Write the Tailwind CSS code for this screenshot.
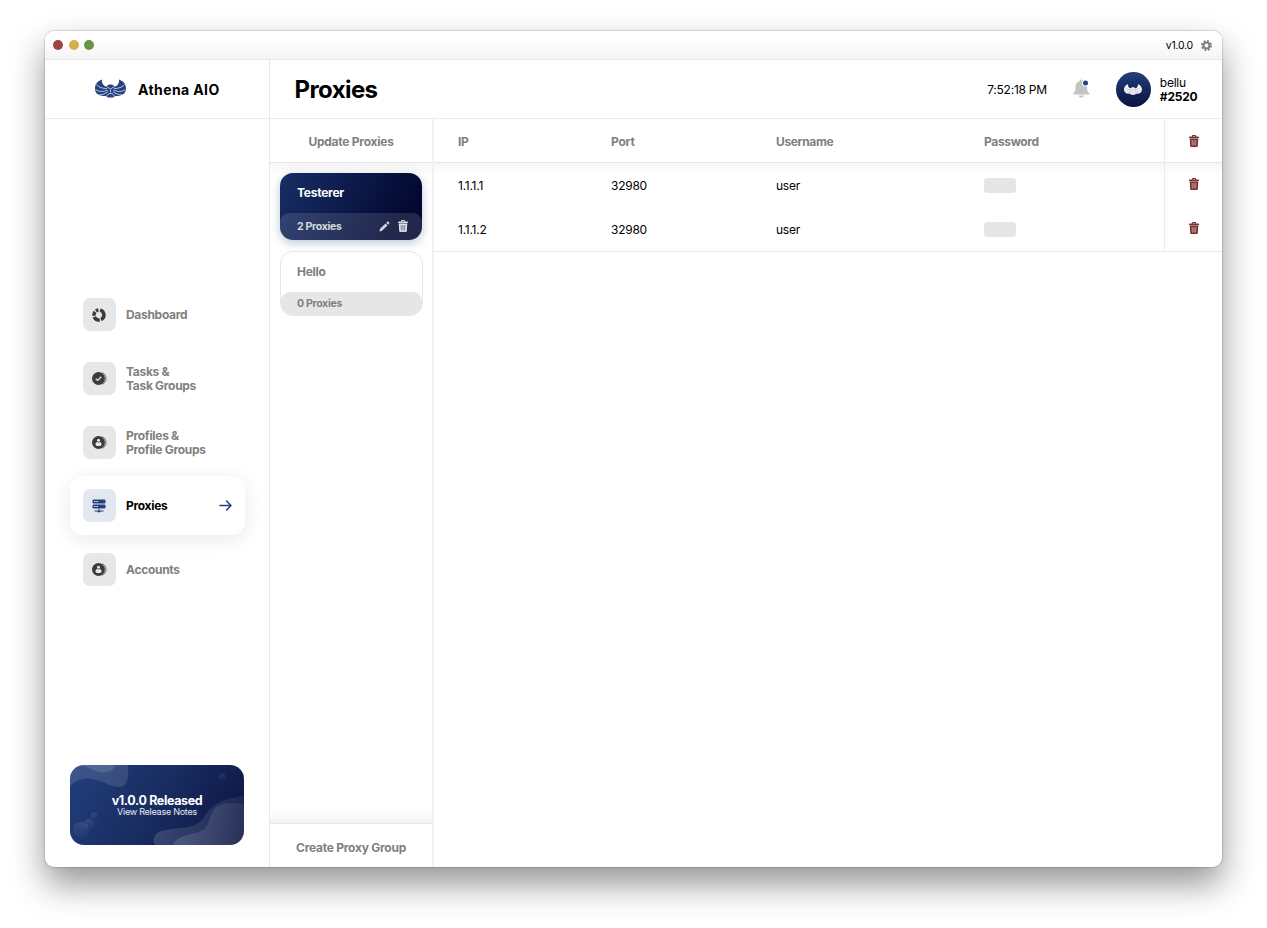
<!DOCTYPE html>
<html lang="en">
<head>
<meta charset="utf-8">
<title>Athena AIO</title>
<script src="https://cdn.jsdelivr.net/npm/@tailwindcss/browser@4"></script>
</head>
<body class="h-[928px] w-[1267px] overflow-hidden bg-white pt-[31px] pl-[45px] font-['Inter',sans-serif] text-[12px] tracking-[-0.25px] text-black">
<svg class="hidden">
  <symbol id="owl" viewBox="0 0 62 38">
    <path fill="currentColor" d="M14 1C5 4 0 10 0 19c0 8 5 12 11 14 4 1 7 1 10 1 2 2 4 3 6 3h8c2 0 4-1 6-3 3 0 6 0 10-1 6-2 11-6 11-14C62 10 57 4 48 1c1 5-1 9-5 13l-4 1c-2-3-5-4-8-4s-6 1-8 4l-4-1C15 10 13 6 14 1z"/>
    <path fill="none" stroke="var(--cut)" stroke-width="1.700" d="M3 11c5 6 12 8 21 8M1 21c7 5 15 5 24 1M7 32c8 0 14-3 19-7M59 11c-5 6-12 8-21 8M61 21c-7 5-15 5-24 1M55 32c-8 0-14-3-19-7M23 15l8 5 8-5M23 36c1-5 4-7 8-7s7 2 8 7M31 21v6"/>
  </symbol>
  <symbol id="trash" viewBox="0 0 20 24">
    <path fill="currentColor" d="M6 3V1.500C6 .6 6.600 0 7.500 0h5c.9 0 1.500.6 1.500 1.500V3h4.500c.8 0 1.500.7 1.500 1.500V6H0V4.500C0 3.700.7 3 1.500 3zm2 0h4V2H8z"/>
    <path fill="currentColor" fill-opacity=".45" d="M1.500 6h17L17.500 22H2.500z"/>
    <path fill="currentColor" fill-rule="evenodd" d="M1.500 7.500h17L17.500 22c-.1 1.200-1 2-2.200 2H4.700c-1.200 0-2.100-.8-2.200-2zM5.200 10l.5 11h1.800L7.200 10zm3.800 0v11h2V10zm3.800 0-.4 11h1.800l.5-11z"/>
  </symbol>
  <symbol id="person" viewBox="0 0 30 26">
    <path fill="none" stroke="#3b3b3b" stroke-width="2" d="M20 1.500c5 2 8 6 8 11.500s-3 9.500-8 11.500" opacity=".75"/>
    <circle cx="13" cy="13" r="13" fill="#3b3b3b"/>
    <circle cx="13" cy="8.500" r="3" fill="#e8e8e8"/>
    <path fill="#e8e8e8" d="M7 17c0-3.500 2-5 4-5l2 1.500 2-1.500c2 0 4 1.500 4 5 0 2-2.500 3-6 3s-6-1-6-3z"/>
  </symbol>
</svg>

<div class="flex h-[836px] w-[1177px] flex-col overflow-hidden rounded-[9px] bg-white shadow-[0_0_1px_1px_rgba(0,0,0,0.13),0_17px_34px_rgba(0,0,0,0.42)]">
  <div class="flex h-[29px] shrink-0 items-center border-b border-[#e8e8e8] bg-linear-to-b from-white from-30% to-[#f4f4f4] pr-[10px] pl-[8.400px]">
    <div class="flex gap-[5.500px]">
      <span class="size-[10px] rounded-full bg-[#9c4343]"></span>
      <span class="size-[10px] rounded-full bg-[#d7ad4d]"></span>
      <span class="size-[10px] rounded-full bg-[#6c9343]"></span>
    </div>
    <span class="ml-auto pt-px text-[10.500px]">v1.0.0</span>
    <svg class="ml-[8px] size-[11px] text-[#808080]" viewBox="0 0 24 24" fill="none" stroke="currentColor"><circle cx="12" cy="12" r="6.500" stroke-width="4.500"/><circle cx="12" cy="12" r="10" stroke-width="4" stroke-dasharray="4.200 3.654"/></svg>
  </div>

  <div class="flex min-h-0 flex-1">
    <aside class="flex w-[225px] shrink-0 flex-col border-r border-[#e8e8e8]">
      <div class="flex h-[59px] shrink-0 items-center border-b border-[#ececec] pl-[50px]">
        <svg class="mb-px h-[19px] w-[31px] text-[#24427f] [--cut:#d3dcec]"><use href="#owl"/></svg>
        <span class="ml-[12px] text-[14px] font-bold tracking-[0.400px]">Athena AIO</span>
      </div>
      <nav class="flex flex-col gap-[4.750px] pt-[166px] pl-[25px] leading-[14px] font-bold tracking-[-0.300px] text-[#808080]">
        <a class="flex h-[59px] w-[174px] items-center pl-[13px]">
          <span class="flex size-[33px] items-center justify-center rounded-[7px] bg-[#e7e7e7] pr-px">
            <svg class="size-[14px]" viewBox="0 0 28 28" fill="none" stroke="#3b3b3b" stroke-width="7"><path d="M16.200 4.300a10 10 0 0 1 1.800 18.800M15.500 23.900a10 10 0 0 1-10.800-6.200M4.200 15.500a10 10 0 0 1 2-7.700M8 6a10 10 0 0 1 4.800-2"/></svg>
          </span>
          <span class="ml-[10px]">Dashboard</span>
        </a>
        <a class="flex h-[59px] w-[174px] items-center pl-[13px]">
          <span class="flex size-[33px] items-center justify-center rounded-[7px] bg-[#e7e7e7]">
            <svg class="h-[13px] w-[15px]" viewBox="0 0 30 26" fill="none"><path d="M20 1.500c5 2 8 6 8 11.500s-3 9.500-8 11.500" stroke="#3b3b3b" stroke-width="2" opacity=".75"/><circle cx="13" cy="13" r="13" fill="#3b3b3b"/><path d="M7.500 13.500l4 3.500 7-7.500" stroke="#e8e8e8" stroke-width="2.500"/></svg>
          </span>
          <span class="ml-[10px] pt-[2px]">Tasks &amp;<br>Task Groups</span>
        </a>
        <a class="flex h-[59px] w-[174px] items-center pl-[13px]">
          <span class="flex size-[33px] items-center justify-center rounded-[7px] bg-[#e7e7e7]"><svg class="h-[13px] w-[15px]"><use href="#person"/></svg></span>
          <span class="ml-[10px] pt-[2px]">Profiles &amp;<br>Profile Groups</span>
        </a>
        <a class="flex h-[59px] w-[175px] items-center rounded-[13px] bg-white pr-[13px] pl-[13px] text-black shadow-[0_4px_20px_rgba(0,0,0,0.09)]">
          <span class="flex size-[33px] items-center justify-center rounded-[7px] bg-[#e3e8f0] pr-px">
            <svg class="size-[14px]" viewBox="0 0 28 28" fill="#24427f"><rect x="1" y="1" width="26" height="8" rx="2.500"/><rect x="1" y="11" width="26" height="8" rx="2.500"/><path d="M13 19h2v4h8v2h-6v1.500h-6V25H5v-2h8z"/><path fill="#e3e8f0" d="M4 4h3v2H4zm5 0h3v2H9zM4 14h3v2H4zm5 0h3v2H9z"/></svg>
          </span>
          <span class="ml-[10px]">Proxies</span>
          <svg class="ml-auto h-[11px] w-[13px]" viewBox="0 0 26 22" fill="none" stroke="#24427f" stroke-width="3" stroke-linecap="round" stroke-linejoin="round"><path d="M2 11h21M15 2l9 9-9 9"/></svg>
        </a>
        <a class="flex h-[59px] w-[174px] items-center pl-[13px]">
          <span class="flex size-[33px] items-center justify-center rounded-[7px] bg-[#e7e7e7]"><svg class="h-[13px] w-[15px]"><use href="#person"/></svg></span>
          <span class="ml-[10px]">Accounts</span>
        </a>
      </nav>
      <div class="relative mt-auto mb-[22px] ml-[25px] flex h-[80px] w-[174px] flex-col items-center justify-center overflow-hidden rounded-[14px] bg-linear-[120deg,#213f7c,#182c60_50%,#0e1644_95%] text-white">
        <svg class="absolute inset-0" width="174" height="80" viewBox="0 0 174 80">
          <defs><linearGradient id="bub" x1="0" y1="0" x2="0" y2="1"><stop stop-color="#fff" stop-opacity=".1"/><stop offset="1" stop-color="#fff" stop-opacity=".01"/></linearGradient><linearGradient id="wave" x1="0" y1="0" x2="1" y2="0"><stop stop-color="#fff" stop-opacity=".14"/><stop offset="1" stop-color="#fff" stop-opacity=".06"/></linearGradient></defs>
          <g fill="#fff" fill-opacity=".12">
            <path d="M0 21C8 13 17 12 27 15c10 3 14 7 22 7 8 0 10-7 9-22H0z"/>
            <path d="M11 0c8 2 11 6 20 7 8 1 13-2 14-7z"/>
          </g>
          <g fill="url(#wave)">
            <path d="M174 31c-18 2-27 6-34 13-7 8-7 15-22 18-16 3-31 1-34 11-1 3 0 5 1 7h89z"/>
            <path d="M174 39c-18-2-28-1-32 9-4 9-3 17-17 20-11 3-18 4-22 12h71z"/>
          </g>
          <g fill="url(#bub)"><circle cx="11" cy="65" r="8"/><circle cx="19" cy="59" r="5"/><circle cx="24" cy="51" r="3.500"/><circle cx="152" cy="12" r="3.500"/></g>
        </svg>
        <span class="relative text-[12.500px] leading-[13px] font-bold tracking-[-0.350px]">v1.0.0 Released</span>
        <span class="relative text-[9px] leading-[10px] text-white/90">View Release Notes</span>
      </div>
    </aside>

    <main class="flex min-w-0 flex-1 flex-col">
      <header class="flex h-[59px] shrink-0 items-center border-b border-[#ececec] pr-[24.500px] pl-[24.500px]">
        <h1 class="pt-px text-[24px] font-bold tracking-tight">Proxies</h1>
        <span class="ml-auto pt-[2px]">7:52:18 PM</span>
        <svg class="ml-[26px] h-[20px] w-[17px]" viewBox="0 0 34 40"><path fill="#c4c4c4" d="M16 1c1.500 0 2.500 1 2.500 3C25 5 28 10 28 16c0 7 1 10 5 13 0 1 0 2-1 2H1c-1 0-1-1-1-2 4-3 5-6 5-13C5 10 8 5 13.500 4c0-2 1-3 2.500-3zM11 33h11c-1 3-3 4-5.500 4S12 36 11 33z"/><circle cx="25" cy="8" r="7" fill="#fff"/><circle cx="25" cy="8" r="5" fill="#24427f"/></svg>
        <span class="ml-[26px] flex size-[35px] items-center justify-center rounded-full bg-linear-to-b from-[#213f7c] to-[#0a1240]"><svg class="h-[11px] w-[18px] text-white [--cut:#8b97b8]"><use href="#owl"/></svg></span>
        <div class="ml-[9px] pt-px leading-[14px]"><div>bellu</div><div class="font-bold tracking-[-0.200px]">#2520</div></div>
      </header>

      <div class="flex min-h-0 flex-1">
        <section class="flex w-[164px] shrink-0 flex-col border-r-2 border-[#f1f1f1] font-bold text-[#808080]">
          <div class="flex h-[44px] shrink-0 items-center justify-center border-b border-[#e8e8e8] pt-[3px]">Update Proxies</div>
          <div class="flex min-h-0 flex-1 flex-col bg-[linear-gradient(#f5f5f5,#ffffff_12px,#ffffff_calc(100%-14px),#f4f4f4)] pt-[10px] pl-[10px]">
            <div class="flex h-[67px] w-[142px] flex-col overflow-hidden rounded-[13px] bg-linear-[115deg,#182e65,#030931_85%] shadow-[0_3px_10px_rgba(36,66,127,0.3)]">
              <div class="flex h-[40px] items-center pl-[17px] text-white">Testerer</div>
              <div class="flex flex-1 items-center rounded-t-[9px] bg-white/12 pr-[14px] pl-[17px] text-white/80">
                <span class="pt-px text-[10.500px] tracking-[-0.300px]">2 Proxies</span>
                <svg class="ml-auto size-[11px]" viewBox="0 0 22 22" fill="currentColor"><path d="M1 21l1-5.500L13 5l4 4L6 19.500zM14.500 3.500L16.500 1.700c.8-.8 1.500-.8 2.200 0l1.600 1.600c.8.8.8 1.500 0 2.200L18.500 7.500z"/></svg>
                <svg class="ml-[8px] mb-[2px] h-[12px] w-[10px]"><use href="#trash"/></svg>
              </div>
            </div>
            <div class="mt-[11px] flex h-[65px] w-[143px] flex-col overflow-hidden rounded-[13px] border border-[#e6e6e6] bg-white">
              <div class="flex h-[40px] items-center pl-[16px]">Hello</div>
              <div class="flex flex-1 items-center rounded-t-[9px] bg-[#e6e6e6] pl-[16px] text-[10.500px] tracking-[-0.300px]">0 Proxies</div>
            </div>
          </div>
          <div class="flex h-[44px] shrink-0 items-center justify-center border-t border-[#e8e8e8] pt-[4px]">Create Proxy Group</div>
        </section>

        <section class="min-w-0 flex-1">
          <div class="grid h-[44px] grid-cols-[153px_165px_208px_180px_1fr] items-center border-b border-[#e8e8e8] pl-[24px] font-bold text-[#808080]">
            <span class="pt-[3px]">IP</span><span class="pt-[3px]">Port</span><span class="pt-[3px] tracking-[-0.350px]">Username</span><span class="pt-[3px] tracking-[-0.350px]">Password</span>
            <span class="flex h-full items-center justify-center border-l border-[#ebebeb] text-[#7b2f31]"><svg class="h-[12px] w-[10px]"><use href="#trash"/></svg></span>
          </div>
          <div class="border-b border-[#e8e8e8] bg-[linear-gradient(#f5f5f5,#ffffff_11px)]">
            <div class="grid h-[44px] grid-cols-[153px_165px_208px_180px_1fr] items-center pl-[24px]">
              <span class="pt-[2px]">1.1.1.1</span><span class="pt-[2px]">32980</span><span class="pt-[2px]">user</span><span class="h-[15px] w-[32px] rounded-[3px] bg-[#e6e6e6]"></span>
              <span class="flex h-full items-center justify-center border-l border-[#ebebeb] pb-[2px] text-[#7b2f31]"><svg class="h-[12px] w-[10px]"><use href="#trash"/></svg></span>
            </div>
            <div class="grid h-[44px] grid-cols-[153px_165px_208px_180px_1fr] items-center pl-[24px]">
              <span class="pt-[2px]">1.1.1.2</span><span class="pt-[2px]">32980</span><span class="pt-[2px]">user</span><span class="h-[15px] w-[32px] rounded-[3px] bg-[#e6e6e6]"></span>
              <span class="flex h-full items-center justify-center border-l border-[#ebebeb] pb-[2px] text-[#7b2f31]"><svg class="h-[12px] w-[10px]"><use href="#trash"/></svg></span>
            </div>
          </div>
        </section>
      </div>
    </main>
  </div>
</div>
</body>
</html>
